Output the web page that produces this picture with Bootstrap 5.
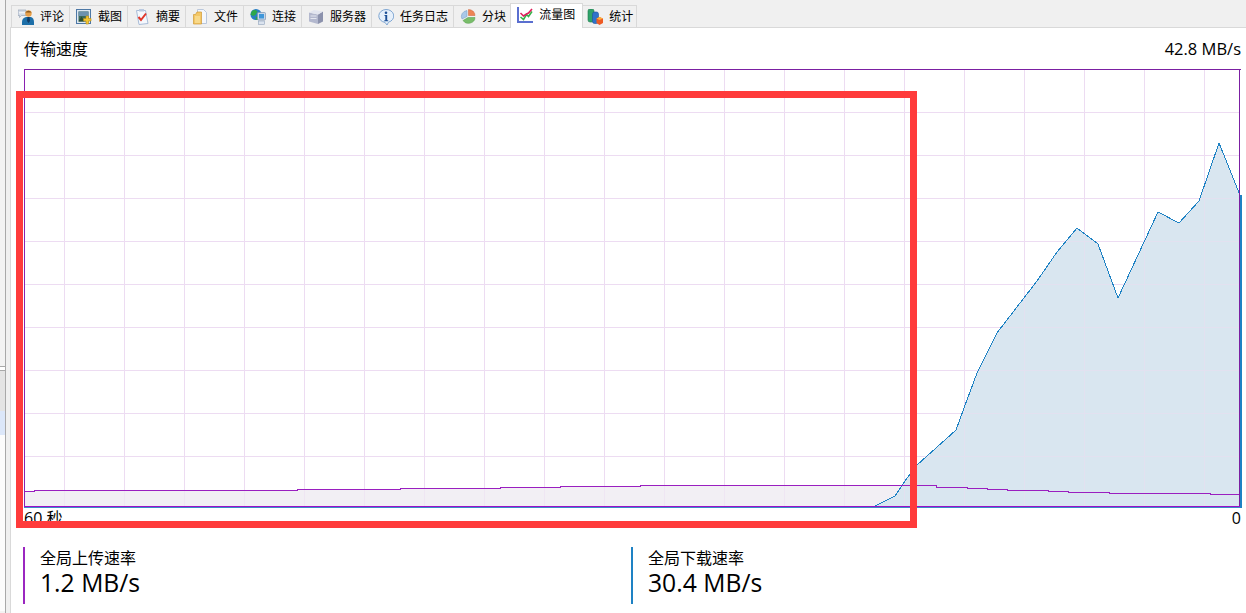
<!DOCTYPE html>
<html lang="zh-CN">
<head>
    <meta charset="UTF-8">
    <meta name="viewport" content="width=device-width, initial-scale=1.0">
    <title>流量图</title>
    <link rel="stylesheet" href="https://cdn.jsdelivr.net/npm/bootstrap@5.3.0/dist/css/bootstrap.min.css">
    <style>
        html, body { height: 613px; overflow: hidden; }
        body { background: #f0f0f0; font-family: "Open Sans", "Noto Sans CJK SC", sans-serif; color: #000; }

        /* left edge of the neighbouring pane */
        .side-rail { width: 6px; height: 613px; flex: none; border-right: 1px solid #a9a9a9; background: #f3f3f3; }
        .rail-line { height: 367px; border-bottom: 1px solid #a9a9a9; }
        .rail-gap { height: 4px; background: #fff; border-bottom: 1px solid #a9a9a9; }
        .rail-grey { height: 40px; background: #e4e4e4; }
        .rail-blue { height: 24px; background: #dce7f9; }
        .rail-rest { height: 176px; background: #fcfcfc; }

        .work-area { margin-left: 4px; min-width: 0; flex: 1; padding-top: 5px; }

        .nav-tabs.tab-strip { height: 23px; padding-left: 1px; border-bottom: 1px solid #d9d9d9; --bs-nav-tabs-border-width: 0; }
        .tab-strip .nav-link { display: flex; align-items: center; gap: 6px; height: 22px; padding: 0 5px 0 6px; margin: 0; border: 0; border-right: 1px solid #d9d9d9; border-top: 1px solid #d9d9d9; border-radius: 0; background: #f0f0f0; color: #000; font-size: 12px; line-height: 1; white-space: nowrap; }
        .tab-strip .nav-item:first-child .nav-link { border-left: 1px solid #d9d9d9; }
        .tab-strip .nav-link.active { position: relative; z-index: 2; height: 25px; margin: -2px -2px 0 -2px; padding: 0 7px 2px 6px; background: #fff; border: 1px solid #d9d9d9; border-bottom: 0; color: #000; }
        .tab-strip .nav-link svg { width: 16px; height: 16px; flex: none; }
        .tab-last .nav-link { padding: 0 3px 0 6px; }

        .pane { height: 590px; padding: 0 0 0 13px; background: #fff; border-left: 1px solid #d9d9d9; }
        .pane-title { height: 41px; padding: 10px 5px 0 0; align-items: flex-start; }
        .pane-title .zh { font-size: 16px; line-height: 22px; }
        .pane-title .num { font-size: 16.5px; line-height: 22px; }
        #chart { display: block; width: 1218px; height: 441px; shape-rendering: crispEdges; }
        .axis-row { height: 16px; padding-right: 5px; font-size: 16px; line-height: 16px; }

        .stat-row { margin: 20px 0 0 -1px; width: 1218px; --bs-gutter-x: 0; }
        .stat-cell { height: 57px; padding-left: 15px; border-left: 2px solid #9b27c0; }
        .stat-cell.down { border-left-color: #1e82c4; }
        .stat-name { font-size: 16px; line-height: 22px; margin-top: 1px; }
        .stat-val { font-size: 24.7px; line-height: 28px; }
        .col-left { width: 608px; flex: none; }

        /* screenshot markup drawn on top of the picture */
        .red-mark { position: absolute; left: 16px; top: 91px; width: 901px; height: 437px; border: 7px solid #ff3b3b; z-index: 5; }
    </style>
</head>
<body class="d-flex">
    <div class="side-rail">
        <div class="rail-line"></div>
        <div class="rail-gap"></div>
        <div class="rail-grey"></div>
        <div class="rail-blue"></div>
        <div class="rail-rest"></div>
    </div>

    <div class="work-area">
        <ul class="nav nav-tabs tab-strip flex-nowrap">
            <li class="nav-item"><a class="nav-link" href="#">
                <svg viewBox="0 0 16 16"><path d="M0 1h8v5.500H3.500L1.500 8.500V6.500H0z" fill="#d3dbe6" stroke="#8d9cb0" stroke-width=".6"/><circle cx="2" cy="3.800" r=".8" fill="#fff"/><circle cx="4" cy="3.800" r=".8" fill="#fff"/><circle cx="6" cy="3.800" r=".8" fill="#fff"/><circle cx="10.500" cy="4.500" r="3.200" fill="#e8a04a"/><path d="M7.300 3.500Q10.500 0 13.700 3.500z" fill="#8a5a20"/><path d="M4 16v-3q0-4 4-5h5q3 1 3 5v3z" fill="#1d6fa8"/><path d="M9.500 8h2l.500 4-1.500 2-1.500-2z" fill="#123c66"/></svg>
                评论</a></li>
            <li class="nav-item"><a class="nav-link" href="#">
                <svg viewBox="0 0 16 16"><rect x=".5" y=".5" width="14" height="14" fill="#dfe8f2" stroke="#4d78a6"/><rect x="2.500" y="2.500" width="10" height="10" fill="#3d6b5a"/><path d="M2.500 2.500h10v4.500h-10z" fill="#6d92ae"/><path d="M2.500 12.500l3-5 3 5z" fill="#2e4f32"/><path d="M10 7h2.500v2.500H15V12h-2.500v3H10v-3H7.500V9.500H10z" fill="#f3c632" stroke="#b88a12" stroke-width=".6"/></svg>
                截图</a></li>
            <li class="nav-item"><a class="nav-link" href="#">
                <svg viewBox="0 0 16 16"><path d="M2.500 1.500h9l2.500 13-9 1z" fill="#f5f8fd" stroke="#a8bcd8"/><rect x="5" y="0" width="5" height="2.500" fill="#b9c9e0"/><path d="M4.500 8l2.500 3 5-6.500" fill="none" stroke="#e0372a" stroke-width="2"/></svg>
                摘要</a></li>
            <li class="nav-item"><a class="nav-link" href="#">
                <svg viewBox="0 0 16 16"><path d="M5.500.5h6l3 3v11h-9z" fill="#f4f7fc" stroke="#b9c7dc"/><path d="M1.500 5.500h2L5 3h4.500v12h-8z" fill="#f3c766" stroke="#d09a35" stroke-width=".7"/><rect x="3" y="7" width="5" height="7" fill="#f8d98a"/></svg>
                文件</a></li>
            <li class="nav-item"><a class="nav-link" href="#">
                <svg viewBox="0 0 16 16"><circle cx="6" cy="5.500" r="5.500" fill="#2a7fc4"/><path d="M2 2Q5 0 7.500 2.500L5.500 6 3 7 .5 5.500z" fill="#2ea84a"/><path d="M6 7.500l3 1-1.500 2.500-2-.5z" fill="#2ea84a"/><rect x="7.500" y="3.500" width="8" height="7.500" rx="1" fill="#c8d6e8" stroke="#7d93b0" stroke-width=".7"/><rect x="9" y="5" width="5" height="4.500" fill="#3f97da"/><rect x="8.500" y="12" width="6" height="3.500" fill="#dbe3ee" stroke="#8fa2bb" stroke-width=".6"/></svg>
                连接</a></li>
            <li class="nav-item"><a class="nav-link" href="#">
                <svg viewBox="0 0 16 16"><path d="M1 3.500L10 5.500V15L1 12.500z" fill="#b3b8ce"/><path d="M10 5.500L15 2.500V12.500L10 15z" fill="#8c92ad"/><path d="M1 3.500l5-2.500 9 1.500-5 3z" fill="#e2e5ef"/><rect x="2.500" y="6.500" width="6" height="1" fill="#e3e6f0"/><rect x="2.500" y="9" width="6" height="1" fill="#e3e6f0"/></svg>
                服务器</a></li>
            <li class="nav-item"><a class="nav-link" href="#">
                <svg viewBox="0 0 16 16"><path d="M8 .5a7.500 6.500 0 0 1 2.500 12.700L9 16l-2-2.600A7.500 6.500 0 0 1 8 .5z" fill="#e6f0fb" stroke="#7fa6d2"/><circle cx="8" cy="3.800" r="1.300" fill="#1c4f96"/><path d="M6.500 6h2.700v5.200h1v1H6.300v-1h1V7h-.8z" fill="#1c4f96"/></svg>
                任务日志</a></li>
            <li class="nav-item"><a class="nav-link" href="#">
                <svg viewBox="0 0 16 16"><path d="M7 1.500A6.500 6 0 0 0 2 10l5-2.500z" fill="#a9c8e8" stroke="#6c94bf" stroke-width=".5"/><path d="M8.500 .5A6.500 6 0 0 1 15 6.500H8.500z" fill="#ee8455" stroke="#cc5f34" stroke-width=".5"/><path d="M3 11.500L8 8.500h7A6.500 6 0 0 1 3 11.500z" fill="#79bd6a" stroke="#4f9a44" stroke-width=".5"/></svg>
                分块</a></li>
            <li class="nav-item"><a class="nav-link active" href="#">
                <svg viewBox="0 0 16 16"><path d="M1 0v15h15" fill="none" stroke="#5a6fd0" stroke-width="2"/><path d="M3.500 10l3 2.500 3-5 2 2 3.500-5" fill="none" stroke="#34b34a" stroke-width="1.600"/><path d="M3.500 6l3 3 3-2 2-1 3.500-4" fill="none" stroke="#e01e5b" stroke-width="1.600"/></svg>
                流量图</a></li>
            <li class="nav-item tab-last"><a class="nav-link" href="#">
                <svg viewBox="0 0 16 16"><rect x="1" y="0" width="6" height="13" rx="2" fill="#2fa36a" stroke="#1c7a4b" stroke-width=".6"/><rect x="5.500" y="3" width="6" height="11.500" rx="2" fill="#2f73c9" stroke="#1f549c" stroke-width=".6"/><path d="M9.500 9.500l3-1.500 3.500 1.500v4.500l-3.500 2-3-2z" fill="#ee5a24"/><path d="M9.500 9.500l3-1.500 3.500 1.500-3.500 1.500z" fill="#fbb03b"/></svg>
                统计</a></li>
        </ul>

        <div class="pane">
            <div class="pane-title d-flex justify-content-between">
                <span class="zh">传输速度</span>
                <span class="num">42.8 MB/s</span>
            </div>
            <svg id="chart" viewBox="24 69 1218 441"></svg>
            <div class="axis-row d-flex justify-content-between">
                <span>60 秒</span>
                <span>0</span>
            </div>
            <div class="row stat-row">
                <div class="col-left"><div class="stat-cell">
                    <div class="stat-name">全局上传速率</div>
                    <div class="stat-val">1.2 MB/s</div>
                </div></div>
                <div class="col"><div class="stat-cell down">
                    <div class="stat-name">全局下载速率</div>
                    <div class="stat-val">30.4 MB/s</div>
                </div></div>
            </div>
        </div>
    </div>

    <div class="red-mark"></div>

    <script>
        // points are in page pixels, read off the graph
        const down = [[875,506],[895,496],[905,481],[917,465],[936,448],[956,430],[964,408],[977,373],[997,333],[1000,329],[1037,281],[1057,252],[1077,228],[1098,244],[1118,298],[1158,212],[1179,223],[1199,201],[1219,143],[1240,195]];
        const up = [[24,491],[34,490],[297,489],[400,488],[500,487],[560,486],[640,485],[936,487],[967,488],[987,489],[1007,490],[1048,491],[1068,492],[1109,493],[1210,494],[1240,494]];

        function stepLine(points) {
            // the upload line moves in flat steps
            let out = [];
            points.forEach((p, i) => {
                if (i > 0) out.push([p[0], points[i - 1][1]]);
                out.push(p);
            });
            return out;
        }
        const toStr = pts => pts.map(p => p.join(",")).join(" ");

        function gridLines(opacity) {
            let s = `<g stroke="#eddcf2" stroke-width="1" opacity="${opacity}">`;
            for (let x = 64; x < 1240; x += 60) s += `<line x1="${x + 0.5}" y1="69" x2="${x + 0.5}" y2="506"/>`;
            for (let y = 112; y < 460; y += 43) s += `<line x1="24" y1="${y + 0.5}" x2="1240" y2="${y + 0.5}"/>`;
            return s + "</g>";
        }

        const upSteps = stepLine(up);
        let svg = gridLines(1);
        svg += `<polygon points="24,506 ${toStr(upSteps)} 1240,506" fill="#f2eff4"/>`;
        svg += `<polygon points="${toStr(down)} 1240,506" fill="#d9e6f0"/>`;
        svg += gridLines(0.45);
        svg += `<polyline points="${toStr(down)}" fill="none" stroke="#1e82c4" stroke-width="1"/>`;
        svg += `<polyline points="${toStr(upSteps)}" fill="none" stroke="#9a1fc0" stroke-width="1"/>`;
        svg += `<rect x="24" y="507" width="1217" height="1" fill="#3a8cc8"/>`;
        svg += `<rect x="1240" y="195" width="2" height="313" fill="#1e82c4"/>`;
        svg += `<rect x="24" y="69" width="1217" height="1" fill="#7b1fa2"/>`;
        svg += `<rect x="24" y="69" width="1" height="438" fill="#8a20b0"/>`;
        svg += `<rect x="1239" y="69" width="1" height="438" fill="#7b1fa2"/>`;
        svg += `<rect x="24" y="506" width="1216" height="1" fill="#9b10c8"/>`;
        document.getElementById("chart").innerHTML = svg;
    </script>
    <script src="https://cdn.jsdelivr.net/npm/bootstrap@5.3.0/dist/js/bootstrap.bundle.min.js"></script>
</body>
</html>
